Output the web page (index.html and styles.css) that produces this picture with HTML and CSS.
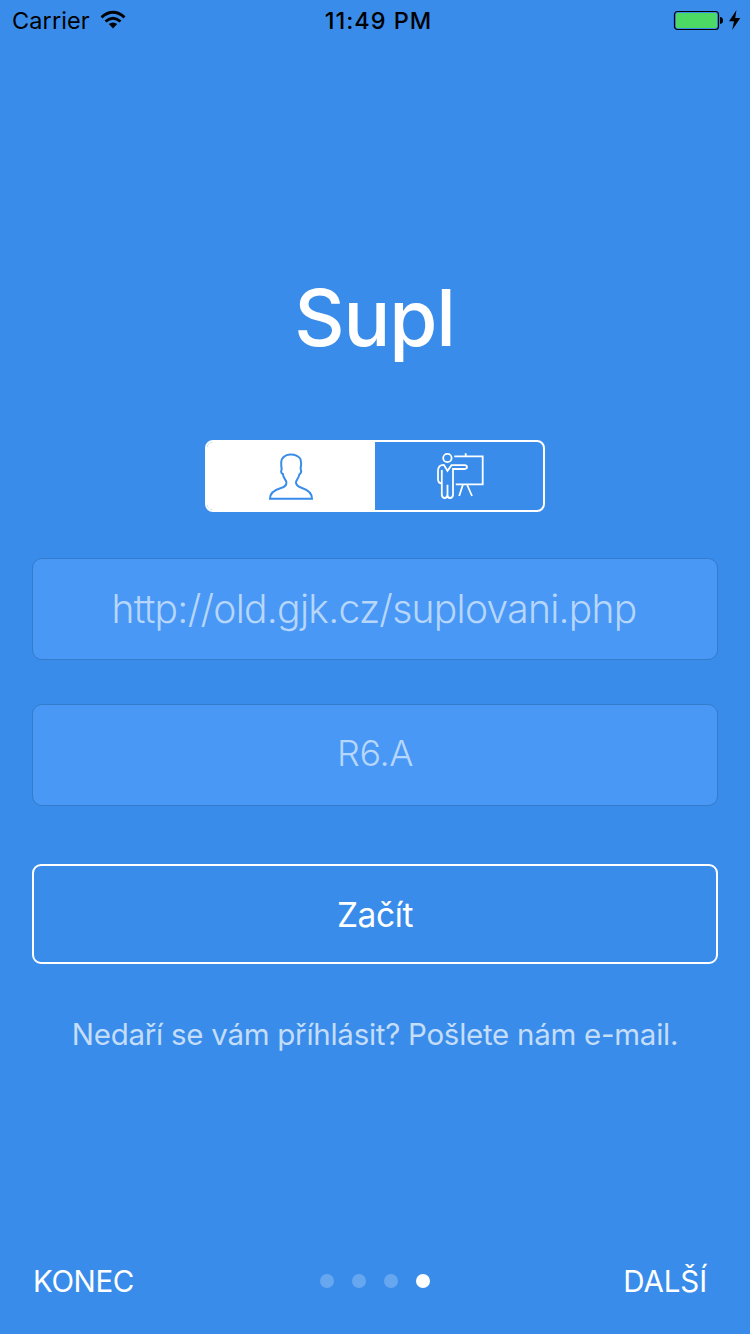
FILE: index.html
```html
<!DOCTYPE html>
<html lang="cs">
<head>
<meta charset="utf-8">
<title>Supl</title>
<link rel="stylesheet" href="styles.css">
</head>
<body>
<div class="screen">
  <header class="status">
    <div class="carrier"><span class="carrier-name">Carrier</span>
      <svg class="wifi" width="26" height="20" viewBox="0 0 26 20"><g fill="none" stroke="#000" stroke-width="2.9"><path d="M1.5 7.3Q13 -2.7 24.5 7.3"/><path d="M5.5 11.5Q13 4.9 20.5 11.5"/></g><path d="M8.8 14.1Q13 10.7 17.2 14.1L13 18.4Z"/></svg>
    </div>
    <div class="time">11:49 PM</div>
    <svg class="battery" width="68" height="22" viewBox="0 0 68 22"><rect x="1.5" y="2.5" width="44" height="18" rx="3" fill="none" stroke="#000" stroke-width="1.2"/><rect x="3" y="4" width="41" height="15" rx="1.6" fill="#4cd964"/><path d="M47 8.1Q50 8.3 50 11.5T47 14.9Z"/><path d="M63.5 1L56 12.3H61L59.2 21L67.3 9.1H62.2Z"/></svg>
  </header>
  <main class="main">
    <h1 class="title">Supl</h1>
    <div class="segments">
      <button class="segment segment-on" aria-label="Student"><svg width="50" height="52" viewBox="265 450 50 52"><path d="M269 498.7H311C311 492.5 307 490 301 488C296.5 486.5 295 485 295 482.5C295.2 479.5 297.8 478.5 298.3 474.5C300.3 473 300.6 471 299.6 468.8C300.1 466 300.3 462 299.6 459.5C298.9 457 297 456.8 295.3 455.7C292 454 286 454.2 283.3 456.5C280.8 458.2 280.2 460 280.2 463C280.2 465.8 280.2 467 280.7 469.2C279.5 471.5 280.3 473.3 281.9 474C282.2 478.5 285.3 479.8 285.4 482.5C285.6 485.5 284 486.8 280 488C273 490 269 493 269 498.7Z" fill="none" stroke="#398cea" stroke-width="2"/></svg></button>
      <button class="segment" aria-label="Teacher"><svg width="50" height="52" viewBox="434 450 50 52"><g fill="none" stroke="#fff" stroke-width="1.8"><circle cx="447.4" cy="458" r="4.2"/><path d="M454.3 456.3H482.7V484.3H455.8M465.7 453.2V456M462.8 485L459.2 496M467.2 485L472 496"/><path d="M441.8 483.5C438.4 483.3 438 481.5 438 479V471C438 466.5 440.5 464.8 443.8 464.8L447.5 470.8L451.5 465.2H464.5Q467 465.3 467 467.1T464.5 469H453V495Q452.5 498 450 498T447.5 495V484.8V495Q447 498 444.7 498T441.8 495V470M447.5 470V471"/></g></svg></button>
    </div>
    <div class="field url"><span>http://old.gjk.cz/suplovani.php</span></div>
    <div class="field class-name"><span>R6.A</span></div>
    <button class="start"><span>Začít</span></button>
    <p class="help"><span>Nedaří se vám příhlásit? Pošlete nám e-mail.</span></p>
  </main>
  <footer class="footer">
    <span class="quit">KONEC</span>
    <div class="dots"><i class="dot"></i><i class="dot"></i><i class="dot"></i><i class="dot dot-on"></i></div>
    <span class="next">DALŠÍ</span>
  </footer>
</div>
</body>
</html>
```
FILE: styles.css
```css
* { box-sizing: border-box; }
body { margin: 0; font-family: Inter, "Liberation Sans", sans-serif; background: #398cea; }
button { font: inherit; color: inherit; padding: 0; margin: 0; background: none; border: 0; }
svg { display: block; }
.screen { width: 750px; height: 1334px; display: flex; flex-direction: column; color: #fff; background: #398cea; }
.status { height: 40px; display: grid; grid-template-columns: 1fr auto 1fr; align-items: center; padding: 0 9px 0 12px; color: #000; }
.carrier { display: flex; align-items: center; gap: 10px; font-size: 23.5px; line-height: 38px; letter-spacing: .1px; }
.carrier-name { padding-top: 2px; }
.time { font-size: 23.5px; font-weight: 500; line-height: 38px; letter-spacing: 1px; padding: 2px 0 0 4px; }
.battery { justify-self: end; }
.main { flex: 1; display: flex; flex-direction: column; align-items: center; padding: 228px 32px 0; }
.title { margin: 0 0 72px; font-size: 78px; line-height: 100px; font-weight: 500; letter-spacing: -1.2px; padding-right: 1px; }
.segments { width: 340px; height: 72px; display: flex; border: 2px solid #fff; border-radius: 8px; overflow: hidden; margin-bottom: 46px; }
.segment { flex: 1; display: flex; align-items: center; justify-content: center; }
.segment-on { background: #fff; }
.field { width: 686px; height: 102px; display: flex; align-items: center; justify-content: center; border: 1px solid #347bcb; border-radius: 10px; background: #4998f5; color: #b6d6fb; font-weight: 300; margin-bottom: 44px; }
.url { font-size: 39px; letter-spacing: -.73px; padding: 0 2px 2px 0; }
.class-name { font-size: 36px; letter-spacing: -.4px; padding-bottom: 4px; margin-bottom: 58px; }
.start { width: 686px; height: 100px; border: 2px solid #fff; border-radius: 9px; font-size: 33.5px; letter-spacing: -.4px; padding-top: 1px; margin-bottom: 49px; }
.help { margin: 0; font-size: 29.5px; line-height: 42px; letter-spacing: -.27px; color: #c4ddf9; white-space: nowrap; }
.footer { height: 106px; display: grid; grid-template-columns: 1fr auto 1fr; align-items: center; padding: 0 43px 0 33px; font-size: 29.5px; letter-spacing: -.4px; }
.next { justify-self: end; letter-spacing: -.1px; }
.dots { display: flex; gap: 18px; padding-left: 10px; }
.dot { width: 14px; height: 14px; border-radius: 50%; background: #67a7f0; }
.dot-on { background: #fff; }
```
